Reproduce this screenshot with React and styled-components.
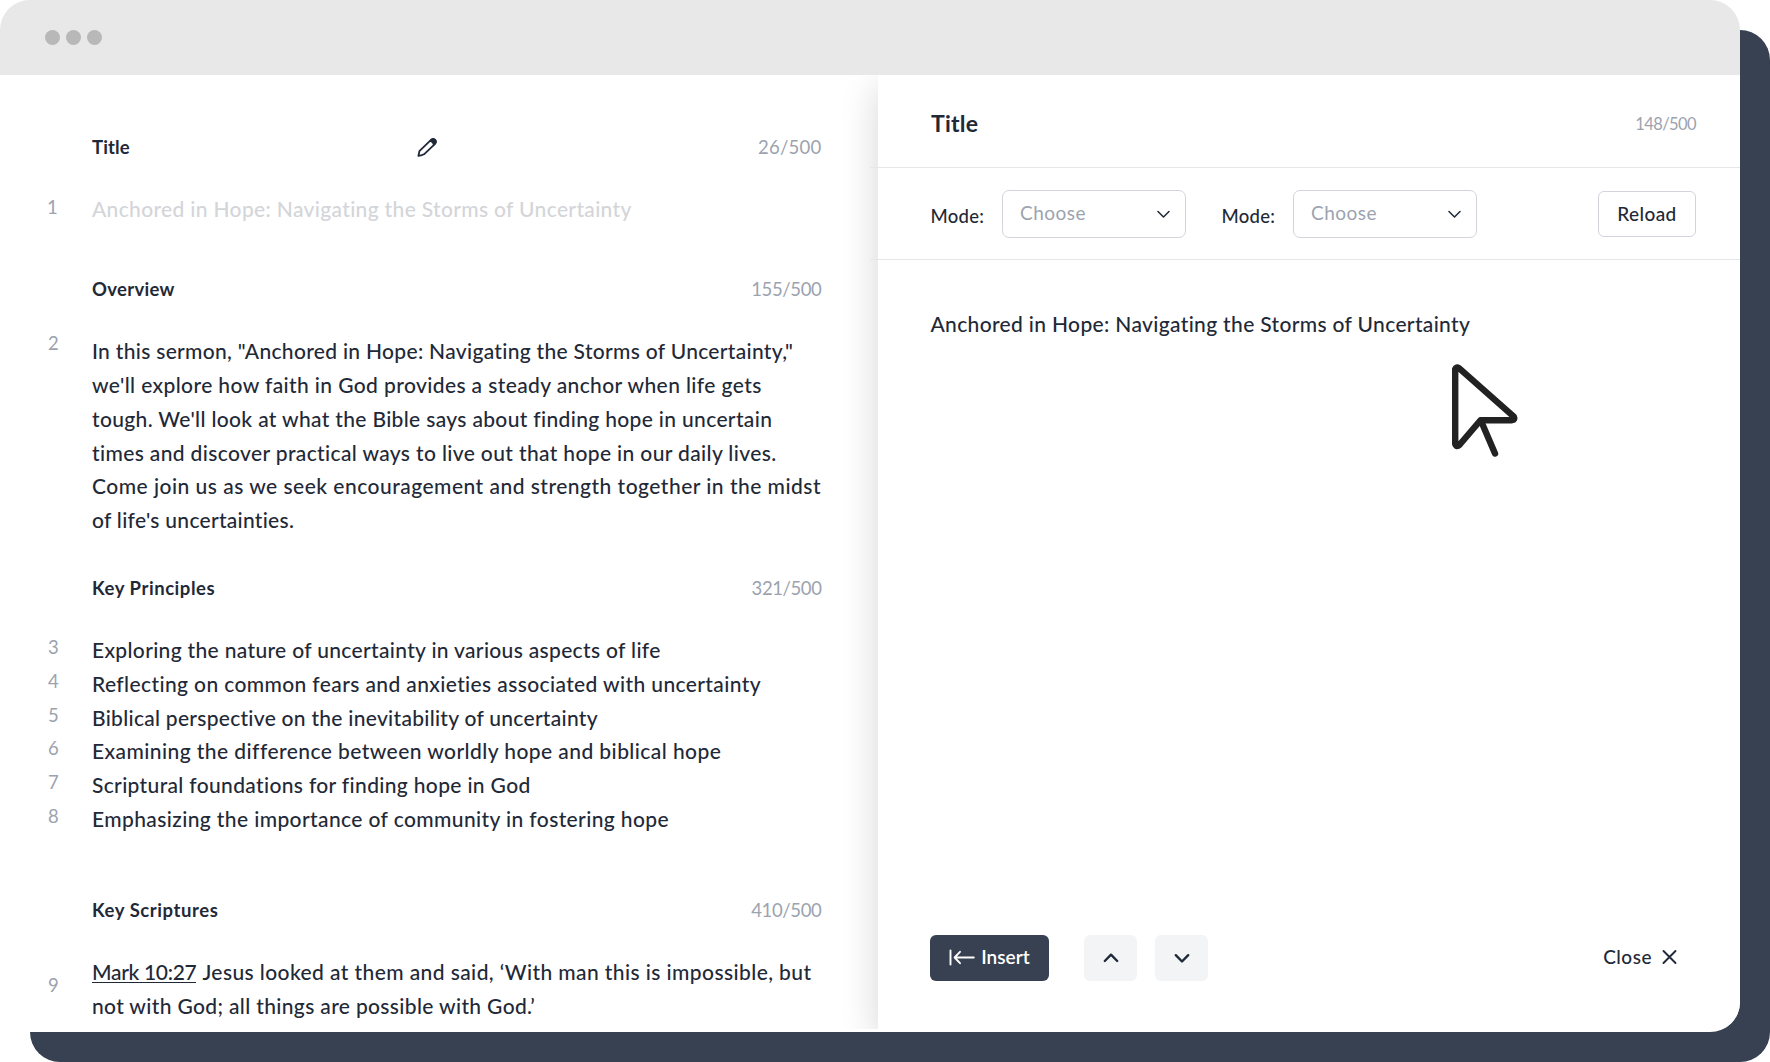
import React from "react";
import styled, { createGlobalStyle } from "styled-components";

const ink = "#1f2937";
const slate = "#374151";
const muted = "#9ca3af";
const line = "#e5e7eb";
const border = "#d1d5db";

const GlobalStyle = createGlobalStyle`
  *, *::before, *::after { box-sizing: border-box; }
  body {
    margin: 0;
    background: #fff;
    color: ${ink};
    font-family: Lato, "Open Sans", sans-serif;
  }
  svg { display: block; flex: none; }
`;

const Stage = styled.div`
  width: 1770px;
  height: 1062px;
  padding: 30px 0 0 30px;
  overflow: hidden;
`;

const Backdrop = styled.div`
  width: 1740px;
  height: 1032px;
  border-radius: 30px;
  background: ${slate};
`;

const Window = styled.div`
  position: relative;
  top: -30px;
  left: -30px;
  width: 1740px;
  height: 1032px;
  display: flex;
  flex-direction: column;
  overflow: hidden;
  background: #fff;
  border-radius: 30px 30px 30px 0;
`;

const TitleBar = styled.div`
  flex: none;
  height: 75px;
  padding-left: 45px;
  display: flex;
  align-items: center;
  gap: 6px;
  background: #e8e8e8;
`;

const Dot = styled.span`
  width: 15px;
  height: 15px;
  border-radius: 50%;
  background: #b8b8b8;
`;

const Panes = styled.div`
  flex: 1;
  display: flex;
  min-height: 0;
`;

const Outline = styled.div`
  width: 878px;
  flex: none;
  padding: 61px 56.5px 0 48px;
`;

const Section = styled.section`
  display: grid;
  grid-template-columns: 44px 1fr;
  row-gap: 34px;
  margin-bottom: ${(p) => p.$after || 0}px;
`;

const SectionHead = styled.div`
  grid-column: 2;
  height: 22px;
  display: flex;
  align-items: center;
  line-height: 22px;
`;

const Heading = styled.h2`
  margin: 0;
  font-size: 18.5px;
  font-weight: 700;
  letter-spacing: ${(p) => p.$ls || 0}px;
`;

const PencilSlot = styled.span`
  margin-left: 287.5px;
`;

const Counter = styled.span`
  margin-left: auto;
  color: ${muted};
  font-size: ${(p) => p.$size || 18.5}px;
  letter-spacing: ${(p) => p.$ls || 0}px;
`;

const Gutter = styled.div`
  position: relative;
  top: ${(p) => p.$shift}px;
  height: 0;
  color: ${muted};
  font-size: 18.5px;
  line-height: 33.8px;
  text-indent: ${(p) => p.$indent || 0}px;
  div { height: 33.8px; }
`;

const Copy = styled.div`
  font-size: 21px;
  font-weight: 500;
  line-height: 33.8px;
  color: ${(p) => (p.$faded ? "#d3d5d9" : ink)};
`;

const Line = styled.div`
  height: 33.8px;
  white-space: nowrap;
  letter-spacing: ${(p) => p.$ls}px;
`;

const Reference = styled.a`
  display: inline-block;
  height: 28px;
  margin-right: 6px;
  border-bottom: 1px solid ${ink};
  letter-spacing: -0.32px;
  vertical-align: top;
`;

const Editor = styled.div`
  width: 862px;
  height: 954px;
  display: flex;
  flex-direction: column;
  background: #fff;
  box-shadow: 0 12px 36px rgba(0, 0, 0, 0.165);
  clip-path: inset(0 0 0 -60px);
`;

const EditorHead = styled.div`
  height: 92px;
  padding: 4px 44px 0 53px;
  display: flex;
  align-items: center;
  justify-content: space-between;
  ${Counter} { padding-top: 1px; }
`;

const EditorTitle = styled.h1`
  margin: 0;
  font-size: 23px;
  line-height: 28px;
  font-weight: 700;
  letter-spacing: 0.25px;
`;

const Divider = styled.div`
  flex: none;
  height: 1px;
  margin-left: -8px;
  background: ${line};
`;

const Toolbar = styled.div`
  height: 91px;
  padding: 1px 44px 0 52.5px;
  display: flex;
  align-items: center;
`;

const Field = styled.label`
  width: 291px;
  display: flex;
  align-items: center;
  font-size: 18.5px;
  font-weight: 500;
`;

const FieldLabel = styled.span`
  width: 71.5px;
  padding-top: 3px;
  letter-spacing: 0.25px;
`;

const Select = styled.span`
  width: 184px;
  height: 48px;
  padding: 0 15.5px 0 17px;
  display: flex;
  align-items: center;
  justify-content: space-between;
  border: 1px solid ${border};
  border-radius: 7px;
  color: ${muted};
  font-size: 19px;
  font-weight: 400;
  line-height: 24px;
  letter-spacing: 0.5px;
  span { padding-bottom: 2px; }
`;

const Button = styled.button`
  height: 46px;
  width: ${(p) => (p.$w ? `${p.$w}px` : "auto")};
  margin: 0;
  padding: 0 0 ${(p) => (p.$kind === "outline" ? 1 : 2)}px;
  display: flex;
  align-items: center;
  justify-content: center;
  border: ${(p) => (p.$kind === "outline" ? `1px solid ${border}` : "0")};
  border-radius: 6px;
  background: ${(p) => ({ primary: slate, soft: "#f3f4f6" }[p.$kind] || "transparent")};
  color: ${(p) => (p.$kind === "primary" ? "#fff" : ink)};
  font: ${(p) => (p.$kind === "primary" ? 600 : 500)} 19px/24px Lato, sans-serif;
  letter-spacing: ${(p) => p.$ls || 0}px;
`;

const ReloadSlot = styled.div`
  margin-left: auto;
`;

const Content = styled.div`
  position: relative;
  flex: 1;
  padding: 47px 52.5px;
`;

const Pointer = styled.svg`
  position: absolute;
  left: 572px;
  top: 102px;
`;

const Footer = styled.div`
  display: flex;
  padding: 0 63px 48px 52px;
`;

const InsertSlot = styled.div`
  margin-right: 35px;
  svg { margin-right: 6px; }
`;

const ArrowPair = styled.div`
  display: flex;
  gap: 18px;
  button { padding: 0; }
`;

const CloseSlot = styled.div`
  margin-left: auto;
  svg { margin-left: 10px; }
`;

const Stroke = ({ w, h, d, sw }) => (
  <svg width={w} height={h} viewBox={`0 0 ${w} ${h}`} fill="none" stroke="currentColor" strokeWidth={sw} strokeLinecap="round" strokeLinejoin="round">
    <path d={d} />
  </svg>
);

const Pencil = () => (
  <svg width="21" height="20" viewBox="0 0 21 20" fill="none">
    <path d="M1.4 18.9 L2.4 14.2 L14 2.8 Q16.2 1.1 18.2 2.9 Q19.8 4.8 18 6.8 L7 17.3 Q4 18.9 1.4 18.9 Z" stroke={ink} strokeWidth="1.8" strokeLinejoin="round" />
    <path d="M12 4.5 L14.2 2.2 Q16.5 0.5 18.6 2.5 Q20.6 4.9 18.4 7.2 L16.2 9.2 Q16 5.2 12 4.5 Z" fill={ink} />
  </svg>
);

const ModeField = () => (
  <Field>
    <FieldLabel>Mode:</FieldLabel>
    <Select>
      <span>Choose</span>
      <svg width="13" height="9" viewBox="0 0 13 9" fill="none" stroke={ink} strokeWidth="1.5" strokeLinecap="round" strokeLinejoin="round">
        <path d="M1 1.5 L6.5 7 L12 1.5" />
      </svg>
    </Select>
  </Field>
);

const sections = [
  {
    title: "Title", ls: 0.15, count: "26/500", cls: 0.25, after: 52.5, shift: -1, indent: -1, pencil: true, faded: true,
    lines: [["Anchored in Hope: Navigating the Storms of Uncertainty", 0.34]], numbers: [1],
  },
  {
    title: "Overview", ls: 0.3, count: "155/500", cls: -0.35, after: 39.9, shift: -7,
    lines: [
      ['In this sermon, "Anchored in Hope: Navigating the Storms of Uncertainty,"', 0.31],
      ["we'll explore how faith in God provides a steady anchor when life gets", 0.39],
      ["tough. We'll look at what the Bible says about finding hope in uncertain", 0.34],
      ["times and discover practical ways to live out that hope in our daily lives.", 0.365],
      ["Come join us as we seek encouragement and strength together in the midst", 0.485],
      ["of life's uncertainties.", 0.28],
    ],
    numbers: [2],
  },
  {
    title: "Key Principles", ls: 0.55, count: "321/500", cls: -0.4, after: 63.2, shift: -2,
    lines: [
      ["Exploring the nature of uncertainty in various aspects of life", 0.33],
      ["Reflecting on common fears and anxieties associated with uncertainty", 0.38],
      ["Biblical perspective on the inevitability of uncertainty", 0.28],
      ["Examining the difference between worldly hope and biblical hope", 0.43],
      ["Scriptural foundations for finding hope in God", 0.34],
      ["Emphasizing the importance of community in fostering hope", 0.39],
    ],
    numbers: [3, 4, 5, 6, 7, 8],
  },
  {
    title: "Key Scriptures", ls: 0.57, count: "410/500", cls: -0.35, shift: 14,
    lines: [
      ["Jesus looked at them and said, ‘With man this is impossible, but", 0.41, "Mark 10:27"],
      ["not with God; all things are possible with God.’", 0.35],
    ],
    numbers: [9],
  },
];

export default function App() {
  return (
    <>
      <GlobalStyle />
      <Stage>
        <Backdrop>
          <Window>
            <TitleBar><Dot /><Dot /><Dot /></TitleBar>
            <Panes>
              <Outline>
                {sections.map((s) => (
                  <Section key={s.title} $after={s.after}>
                    <SectionHead>
                      <Heading $ls={s.ls}>{s.title}</Heading>
                      {s.pencil && <PencilSlot><Pencil /></PencilSlot>}
                      <Counter $ls={s.cls}>{s.count}</Counter>
                    </SectionHead>
                    <Gutter $shift={s.shift} $indent={s.indent}>
                      {s.numbers.map((n) => <div key={n}>{n}</div>)}
                    </Gutter>
                    <Copy $faded={s.faded}>
                      {s.lines.map(([text, ls, ref]) => (
                        <Line key={text} $ls={ls}>
                          {ref && <Reference>{ref}</Reference>}
                          {text}
                        </Line>
                      ))}
                    </Copy>
                  </Section>
                ))}
              </Outline>
              <Editor>
                <EditorHead>
                  <EditorTitle>Title</EditorTitle>
                  <Counter $size={16.5} $ls={-0.6}>148/500</Counter>
                </EditorHead>
                <Divider />
                <Toolbar>
                  <ModeField />
                  <ModeField />
                  <ReloadSlot>
                    <Button $kind="outline" $w={98} $ls={0.4}>Reload</Button>
                  </ReloadSlot>
                </Toolbar>
                <Divider />
                <Content>
                  <Copy>
                    <Line $ls={0.34}>Anchored in Hope: Navigating the Storms of Uncertainty</Line>
                  </Copy>
                  <Pointer width="70" height="97" viewBox="0 0 70 97" fill="none" stroke="#222" strokeWidth="6.4" strokeLinecap="round" strokeLinejoin="round">
                    <path d="M5.2 7.2 Q6.2 4.4 9 6.2 L63.8 54.6 Q65.4 57.6 62 58.2 L30.5 58.2 L9.6 82.8 Q6.4 85.6 5.2 82 Z" />
                    <path d="M31.5 60 L45 91.5" />
                  </Pointer>
                </Content>
                <Footer>
                  <InsertSlot>
                    <Button $kind="primary" $w={119} $ls={0.05}>
                      <Stroke w={26} h={17} sw={1.9} d="M1.5 1.5 V15.5 M11 2.8 L5.6 8.5 L11 14.2 M5.8 8.5 H24.8" />
                      Insert
                    </Button>
                  </InsertSlot>
                  <ArrowPair>
                    <Button $kind="soft" $w={53}><Stroke w={16} h={12} sw={2.4} d="M1.8 9 L8 2.7 L14.2 9" /></Button>
                    <Button $kind="soft" $w={53}><Stroke w={16} h={12} sw={2.4} d="M1.8 3.2 L8 9.5 L14.2 3.2" /></Button>
                  </ArrowPair>
                  <CloseSlot>
                    <Button $ls={0.5}>
                      Close
                      <Stroke w={15} h={16} sw={1.9} d="M1.5 2 L13.5 14 M13.5 2 L1.5 14" />
                    </Button>
                  </CloseSlot>
                </Footer>
              </Editor>
            </Panes>
          </Window>
        </Backdrop>
      </Stage>
    </>
  );
}
